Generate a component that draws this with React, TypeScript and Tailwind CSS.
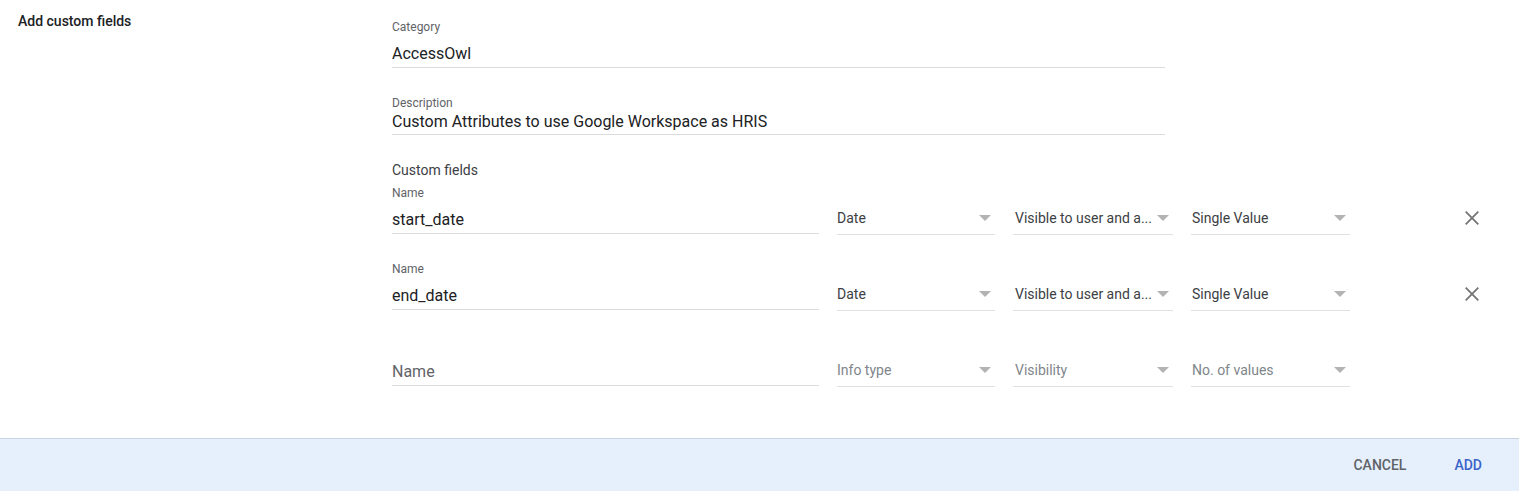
const font = "font-['Roboto',sans-serif]";

function Arrow() {
  return (
    <svg width="12" height="6" viewBox="0 0 12 6" className="shrink-0">
      <path d="M0 0h12L6 6z" fill="#b3b3b3" />
    </svg>
  );
}

function Select({ value, placeholder, className }: { value: string; placeholder?: boolean; className: string }) {
  return (
    <div className={`flex h-[32px] items-center justify-between border-b border-[#e0e0e0] pb-[2px] pr-[4px] ${className}`}>
      <span className={`text-[14px] leading-[20px] ${placeholder ? "text-[#80868b]" : "text-[#3c4043]"}`}>{value}</span>
      <Arrow />
    </div>
  );
}

function Close() {
  return (
    <svg width="14" height="14" viewBox="0 0 14 14" className="mb-[2px] ml-[115px] shrink-0">
      <path d="M0.7 0.7L13.3 13.3M13.3 0.7L0.7 13.3" stroke="#757575" strokeWidth="1.8" fill="none" />
    </svg>
  );
}

function Row({ label, name, type, vis, count, placeholder }: { label?: string; name: string; type: string; vis: string; count: string; placeholder?: boolean }) {
  return (
    <div className="flex h-[76px] items-end">
      <div className="flex w-[427px] flex-col">
        <div className="h-[17px] text-[12px] leading-[16px] text-[#5f6368]">{label}</div>
        <div className={`flex h-[32px] items-center border-b border-[#dadce0] pt-[4px] text-[16px] leading-[24px] ${placeholder ? "text-[#5f6368]" : "text-[#202124]"}`}>{name}</div>
      </div>
      <div className="-mb-[1px] ml-[18px] flex items-center">
        <Select value={type} placeholder={placeholder} className="w-[158px]" />
        <Select value={vis} placeholder={placeholder} className="ml-[18px] w-[160px] pl-[2px]" />
        <Select value={count} placeholder={placeholder} className="ml-[18px] w-[159px] pl-[1px]" />
        {placeholder ? null : <Close />}
      </div>
    </div>
  );
}

export default function App() {
  return (
    <div className={`flex h-[491px] w-[1519px] flex-col overflow-hidden bg-white ${font}`}>
      <div className="flex flex-1 pl-[18px]">
        <div className="w-[374px] pt-[12px] text-[14px] font-medium leading-[18px] text-[#202124]">Add custom fields</div>
        <div className="flex flex-col pt-[19px]">
          <div className="w-[773px]">
            <div className="text-[12px] leading-[16px] text-[#5f6368]">Category</div>
            <div className="flex h-[33px] items-center border-b border-[#dadce0] pt-[6px] text-[16px] leading-[24px] text-[#202124]">AccessOwl</div>
          </div>
          <div className="mt-[27px] w-[773px]">
            <div className="text-[12px] leading-[16px] text-[#5f6368]">Description</div>
            <div className="flex h-[24px] items-center border-b border-[#dadce0] pb-[1px] text-[16px] leading-[24px] text-[#202124]">Custom Attributes to use Google Workspace as HRIS</div>
          </div>
          <div className="mt-[25px] text-[14px] leading-[20px] text-[#3c4043]">Custom fields</div>
          <div className="-mt-[22px]">
            <Row label="Name" name="start_date" type="Date" vis="Visible to user and a..." count="Single Value" />
            <Row label="Name" name="end_date" type="Date" vis="Visible to user and a..." count="Single Value" />
            <Row name="Name" type="Info type" vis="Visibility" count="No. of values" placeholder />
          </div>
        </div>
      </div>
      <div className="flex h-[53px] items-center justify-end gap-[48px] border-t border-[#c9d2e0] bg-[#e6f0fd] pr-[37px] text-[14px] font-medium">
        <span className="text-[#5f6368]">CANCEL</span>
        <span className="text-[#3b63c9]">ADD</span>
      </div>
    </div>
  );
}
